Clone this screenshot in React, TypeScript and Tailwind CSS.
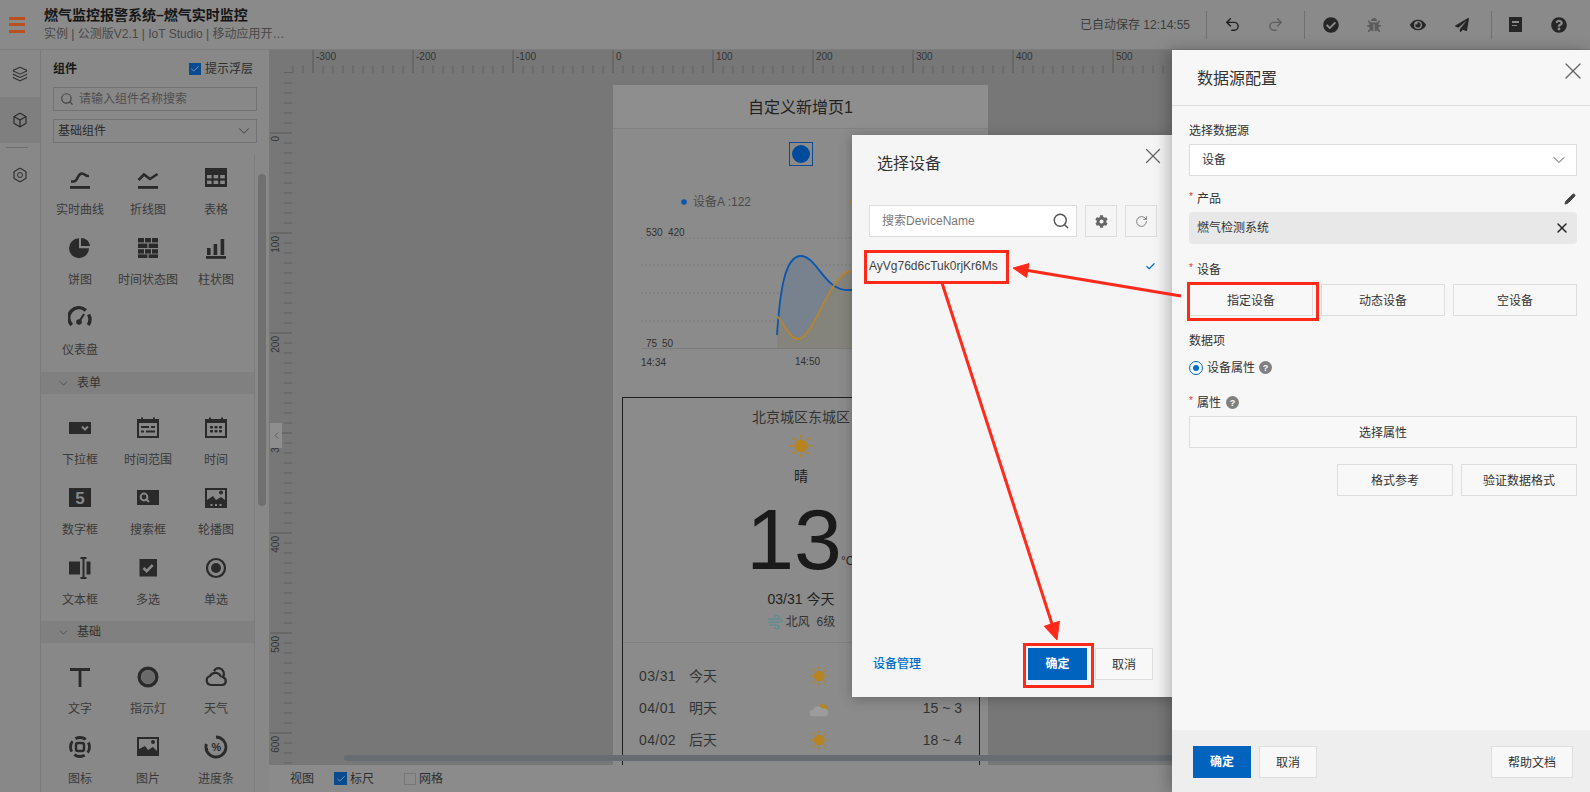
import { ReactNode } from "react";
import { Box, Check, ChevronDown, ChevronLeft, Hexagon, Layers, Pencil, RotateCw, Search, Undo2, Redo2, X } from "lucide-react";
import { FaBug, FaCheckCircle, FaCog, FaEye, FaPaperPlane, FaQuestionCircle } from "react-icons/fa";

const BG = "#888888";

function Ico({ children }: { children: ReactNode }) {
  return (
    <svg width="24" height="24" viewBox="0 0 24 24" fill="currentColor" className="text-[#2a2a2a]">
      {children}
    </svg>
  );
}

const icons: Record<string, ReactNode> = {
  curve: (
    <Ico>
      <rect x="2" y="20" width="20" height="2.8" />
      <path d="M3 15.5h3c4 0 3-8 8-8 3 0 3 3 7 2.5" fill="none" stroke="currentColor" strokeWidth="2.6" />
    </Ico>
  ),
  line: (
    <Ico>
      <rect x="2" y="20" width="20" height="2.8" />
      <path d="M2.5 14 8 8.5l6 4.5 7.5-5" fill="none" stroke="currentColor" strokeWidth="2.6" />
    </Ico>
  ),
  table: (
    <Ico>
      <rect x="1" y="2" width="22" height="19" />
      <g fill={BG}>
        <rect x="3" y="9" width="4.6" height="3.4" /><rect x="9.6" y="9" width="4.6" height="3.4" /><rect x="16.2" y="9" width="4.6" height="3.4" />
        <rect x="3" y="14.6" width="4.6" height="3.4" /><rect x="9.6" y="14.6" width="4.6" height="3.4" /><rect x="16.2" y="14.6" width="4.6" height="3.4" />
      </g>
    </Ico>
  ),
  pie: (
    <Ico>
      <path d="M11 2.2a10 10 0 1 0 10 10H11z" />
      <path d="M13 2a9 9 0 0 1 9 8h-9z" />
    </Ico>
  ),
  brick: (
    <Ico>
      <rect x="2" y="2" width="6" height="4.4" /><rect x="9" y="2" width="6" height="4.4" /><rect x="16" y="2" width="6" height="4.4" />
      <rect x="2" y="7.6" width="9.4" height="4.4" /><rect x="12.6" y="7.6" width="9.4" height="4.4" />
      <rect x="2" y="13.2" width="6" height="4.4" /><rect x="9" y="13.2" width="6" height="4.4" /><rect x="16" y="13.2" width="6" height="4.4" />
      <rect x="2" y="18.4" width="9.4" height="3.6" /><rect x="12.6" y="18.4" width="9.4" height="3.6" />
    </Ico>
  ),
  bars: (
    <Ico>
      <rect x="3" y="12" width="3.6" height="7" /><rect x="9.6" y="8" width="3.6" height="11" /><rect x="16.6" y="3" width="3.6" height="16" />
      <rect x="2" y="20" width="20" height="2.8" />
    </Ico>
  ),
  gauge: (
    <Ico>
      <path d="M3.8 19a10 10 0 0 1 14-14.5M20.6 8.5A10 10 0 0 1 20.2 19" fill="none" stroke="currentColor" strokeWidth="3.4" />
      <circle cx="11" cy="16" r="2.8" />
      <path d="m11 16 5-8" stroke="currentColor" strokeWidth="2" />
    </Ico>
  ),
  select: (
    <Ico>
      <rect x="1" y="6" width="22" height="12" />
      <path d="m14 10.5 3 3 3-3" fill="none" stroke={BG} strokeWidth="2" />
    </Ico>
  ),
  range: (
    <Ico>
      <rect x="2" y="4" width="20" height="17" fill="none" stroke="currentColor" strokeWidth="2" />
      <rect x="2" y="3" width="20" height="4" /><rect x="5" y="1.5" width="2" height="3" /><rect x="17" y="1.5" width="2" height="3" />
      <rect x="5" y="10" width="8" height="2" /><rect x="15" y="10" width="4" height="2" /><rect x="5" y="14.5" width="3" height="2" /><rect x="10" y="14.5" width="9" height="2" />
    </Ico>
  ),
  time: (
    <Ico>
      <rect x="2" y="4" width="20" height="17" fill="none" stroke="currentColor" strokeWidth="2" />
      <rect x="2" y="4" width="20" height="3" /><rect x="5" y="1.5" width="2" height="3" /><rect x="17" y="1.5" width="2" height="3" />
      <g><rect x="6" y="10" width="3" height="2.4" /><rect x="10.5" y="10" width="3" height="2.4" /><rect x="15" y="10" width="3" height="2.4" /><rect x="6" y="14" width="3" height="2.4" /><rect x="10.5" y="14" width="3" height="2.4" /><rect x="15" y="14" width="3" height="2.4" /></g>
    </Ico>
  ),
  num: (
    <Ico>
      <rect x="1" y="2" width="22" height="19" />
      <text x="12" y="18" textAnchor="middle" fontSize="17" fontWeight="700" fill={BG}>5</text>
    </Ico>
  ),
  searchbox: (
    <Ico>
      <rect x="1" y="4" width="22" height="15" />
      <circle cx="8" cy="11" r="3.4" fill="none" stroke={BG} strokeWidth="2" />
      <path d="m10.5 13.5 2.5 2.5" stroke={BG} strokeWidth="2" />
    </Ico>
  ),
  carousel: (
    <Ico>
      <rect x="1" y="2" width="22" height="20" />
      <path d="M3 14V4h18v10l-4-3-5 3-3-4z" fill={BG} />
      <circle cx="17" cy="6.5" r="2" />
      <rect x="6.5" y="18" width="2" height="2" fill={BG} /><rect x="11" y="18" width="2" height="2" fill={BG} /><rect x="15.5" y="18" width="2" height="2" fill={BG} />
    </Ico>
  ),
  textbox: (
    <Ico>
      <rect x="1" y="5.5" width="11" height="13" /><rect x="18.5" y="5.5" width="4" height="13" />
      <path d="M12.5 2h6M12.5 22h6M15.5 2v20" fill="none" stroke="currentColor" strokeWidth="2" />
    </Ico>
  ),
  check: (
    <Ico>
      <rect x="3.5" y="3" width="17.5" height="17.5" />
      <path d="m7.5 12 3.2 3.2 6-6.2" fill="none" stroke={BG} strokeWidth="2.6" />
    </Ico>
  ),
  radio: (
    <Ico>
      <circle cx="12" cy="12" r="9" fill="none" stroke="currentColor" strokeWidth="2.2" />
      <circle cx="12" cy="12" r="5" />
    </Ico>
  ),
  text: (
    <Ico>
      <path d="M2 4.5h20M12 4.5V22" fill="none" stroke="currentColor" strokeWidth="2.8" />
    </Ico>
  ),
  lamp: (
    <Ico>
      <circle cx="12" cy="12" r="8.8" fill="none" stroke="currentColor" strokeWidth="3.4" />
      <circle cx="12" cy="12" r="6.6" fill="#6a6a6a" />
    </Ico>
  ),
  weather: (
    <Ico>
      <path d="M7 20h11a4 4 0 0 0 1-7.8 6 6 0 0 0-3.4-9 5.5 5.5 0 0 0-5.6 3M7 20a4.6 4.6 0 0 1-1-9 6 6 0 0 1 11 1" fill="none" stroke="currentColor" strokeWidth="2.2" />
    </Ico>
  ),
  icon: (
    <Ico>
      <circle cx="12" cy="12" r="9.5" fill="none" stroke="currentColor" strokeWidth="2.8" strokeDasharray="11 3.9" strokeDashoffset="5" />
      <rect x="8" y="8" width="8" height="8" rx="2" fill="none" stroke="currentColor" strokeWidth="2.4" />
    </Ico>
  ),
  image: (
    <Ico>
      <rect x="1" y="2" width="22" height="19" />
      <path d="M3 14V4h18v12l-4-4-5 3-3-4z" fill={BG} />
      <circle cx="17" cy="7" r="2" />
    </Ico>
  ),
  progress: (
    <Ico>
      <path d="M12 2a10 10 0 1 1-9.6 7" fill="none" stroke="currentColor" strokeWidth="2.8" />
      <path d="M2.5 13a10 10 0 0 0 .5 3" fill="none" stroke="currentColor" strokeWidth="2.8" />
      <text x="12.5" y="16" textAnchor="middle" fontSize="11" fontWeight="700" fill="currentColor">%</text>
    </Ico>
  ),
};

const group1 = [["实时曲线", "curve"], ["折线图", "line"], ["表格", "table"], ["饼图", "pie"], ["时间状态图", "brick"], ["柱状图", "bars"], ["仪表盘", "gauge"]];
const group2 = [["下拉框", "select"], ["时间范围", "range"], ["时间", "time"], ["数字框", "num"], ["搜索框", "searchbox"], ["轮播图", "carousel"], ["文本框", "textbox"], ["多选", "check"], ["单选", "radio"]];
const group3 = [["文字", "text"], ["指示灯", "lamp"], ["天气", "weather"], ["图标", "icon"], ["图片", "image"], ["进度条", "progress"]];

function WidgetGrid({ items, className }: { items: string[][]; className: string }) {
  return (
    <div className={"grid grid-cols-[repeat(3,68px)] pl-[5px] " + className}>
      {items.map(([label, key]) => (
        <div key={label} className="h-[70px] flex flex-col items-center">
          <div className="mt-[11px] h-6">{icons[key]}</div>
          <div className="mt-[11px] h-[18px] leading-[18px] text-xs text-[#3a3a3a] whitespace-nowrap">{label}</div>
        </div>
      ))}
    </div>
  );
}

function SectionHead({ label }: { label: string }) {
  return (
    <div className="h-[22px] bg-[#808080] flex items-center pl-[16px] text-xs text-[#333333]">
      <ChevronDown size={13} strokeWidth={1.4} className="mr-[7px] text-[#444444]" />
      {label}
    </div>
  );
}

function Sun({ size = 24 }: { size?: number }) {
  return (
    <svg width={size} height={size} viewBox="0 0 24 24" className="text-[#b8841e]" fill="currentColor">
      <circle cx="12" cy="12" r="6.4" />
      <path d="M12 .8v3M12 20.2v3M.8 12h3M20.2 12h3M4 4l2 2M18 18l2 2M20 4l-2 2M6 18l-2 2" stroke="currentColor" strokeWidth="2" />
    </svg>
  );
}

function CloudSun() {
  return (
    <svg width="24" height="24" viewBox="0 0 24 24">
      <path d="M13 8a6 6 0 0 1 9 6h-7z" fill="#b8841e" />
      <path d="M5 22a4 4 0 0 1 0-8 6 6 0 0 1 11-1 4.5 4.5 0 0 1 4 9z" fill="#9c9c9c" />
    </svg>
  );
}

function HRuler() {
  const ticks = [];
  for (let x = 293; x < 1180; x += 10) {
    const major = (x - 613) % 100 === 0;
    ticks.push(<line key={x} x1={x} x2={x} y1={major ? 50 : 65} y2={73} stroke={major ? "#5a5a5a" : "#626262"} strokeWidth="1" />);
    if (major) {
      ticks.push(
        <text key={"t" + x} x={x + 3} y={60} fontSize="10" fill="#333333">
          {x - 613}
        </text>
      );
    }
  }
  return (
    <svg width="903" height="23" viewBox="269 50 903 23" className="block shrink-0">
      <line x1="284" x2="293" y1="72.5" y2="72.5" stroke="#626262" />
      {ticks}
    </svg>
  );
}

function VRuler() {
  const ticks = [];
  for (let y = 83; y < 765; y += 10) {
    const major = (y - 133) % 100 === 0;
    ticks.push(<line key={y} x1={major ? 270 : 284} x2={292} y1={y} y2={y} stroke={major ? "#5a5a5a" : "#626262"} strokeWidth="1" />);
    if (major) {
      ticks.push(
        <text key={"t" + y} x={279} y={y + 3} fontSize="10" fill="#333333" textAnchor="end" transform={`rotate(-90 279 ${y + 3})`}>
          {y - 133}
        </text>
      );
    }
  }
  return (
    <svg width="24" height="692" viewBox="269 73 24 692" className="block shrink-0">
      {ticks}
    </svg>
  );
}

function Chart() {
  const blue = "M777 335C780 290 785 256 801 256 816 256 824 288 845 290L860 290";
  const orange = "M777 316C785 325 790 339 798 339 814 339 830 271 852 271L860 271";
  return (
    <svg width="375" height="212" viewBox="613 185 375 212" className="block">
      <circle cx="684" cy="202" r="2.8" fill="#0a56ad" />
      <text x="693" y="206" fontSize="12" fill="#4a4a4a">设备A :122</text>
      <circle cx="853" cy="202" r="2.8" fill="#b9842a" />
      {[238, 265, 293, 321].map((y) => (
        <line key={y} x1="641" x2="980" y1={y} y2={y} stroke="#757575" strokeDasharray="1.5 2.5" />
      ))}
      <line x1="641" x2="980" y1="348.5" y2="348.5" stroke="#7c7c7c" />
      <text x="646" y="236" fontSize="10" fill="#2f2f2f">530</text>
      <text x="668" y="236" fontSize="10" fill="#2f2f2f">420</text>
      <text x="646" y="347" fontSize="10" fill="#2f2f2f">75</text>
      <text x="662" y="347" fontSize="10" fill="#2f2f2f">50</text>
      <text x="641" y="366" fontSize="10" fill="#2f2f2f">14:34</text>
      <text x="795" y="365" fontSize="10" fill="#2f2f2f">14:50</text>
      <path d={blue + "V348H777Z"} fill="#78828e" />
      <path d={orange + "V348H777Z"} fill="#85847c" />
      <path d={blue} fill="none" stroke="#0a56ad" strokeWidth="1.8" />
      <path d={orange} fill="none" stroke="#b9842a" strokeWidth="1.8" />
    </svg>
  );
}

function WeatherRow({ date, day, icon, temp }: { date: string; day: string; icon: ReactNode; temp: string }) {
  return (
    <div className="h-8 flex items-center pl-4 pr-[17px] pt-px text-sm text-[#333333]">
      <span className="w-[50px] tracking-[0.4px]">{date}</span>
      <span className="w-[120px]">{day}</span>
      <span className="w-5 h-5 flex items-center justify-center">{icon}</span>
      <span className="flex-1 text-right">{temp}</span>
    </div>
  );
}

function Phone() {
  return (
    <div className="w-[375px] h-[680px] ml-[320px] mt-[12px] bg-[#8b8b8b] shrink-0">
      <div className="h-[44px] pt-[3px] bg-[#8e8e8e] border-b border-[#828282] flex items-center justify-center text-base text-[#222222]">自定义新增页1</div>
      <div className="h-[56px] pt-[13px] flex justify-center">
        <div className="w-6 h-6 border border-[#0d4a8f] flex items-center justify-center">
          <div className="w-[18px] h-[18px] rounded-full bg-[#004a9c]" />
        </div>
      </div>
      <Chart />
      <div className="ml-[9px] w-[358px] h-[400px] border border-[#1f1f1f] flex flex-col">
        <div className="mt-[10px] h-[18px] leading-[18px] text-sm text-center text-[#333333]">北京城区东城区</div>
        <div className="mt-[8px] flex justify-center"><Sun /></div>
        <div className="mt-[9px] h-[18px] leading-[18px] text-sm text-center text-[#222222]">晴</div>
        <div className="relative mt-[14px] h-[80px] leading-[80px] pr-[14px] text-center text-[86px] text-[#1a1a1a]">
          13
          <span className="absolute left-[218px] top-[53px] text-xs leading-[18px] text-[#2a2a2a]">°C</span>
        </div>
        <div className="mt-[11px] h-[18px] leading-[18px] text-sm text-center text-[#222222]">03/31 今天</div>
        <div className="mt-[5px] h-[18px] flex items-center justify-center text-xs text-[#333333]">
          <svg width="16" height="14" viewBox="0 0 16 14" fill="none" stroke="#4d8c92" strokeWidth="1" className="mr-[3px]">
            <path d="M1 4h9a2 2 0 1 0-2-2M1 7h12.5a1.5 1.5 0 1 0-1.5-1.5M2 10h8a2 2 0 1 1-2 2" />
          </svg>
          北风&nbsp;&nbsp;6级
        </div>
        <div className="mt-[11px] border-t border-[#808080]" />
        <div className="mt-4">
          <WeatherRow date="03/31" day="今天" icon={<Sun size={20} />} temp="" />
          <WeatherRow date="04/01" day="明天" icon={<CloudSun />} temp="15 ~ 3" />
          <WeatherRow date="04/02" day="后天" icon={<Sun size={20} />} temp="18 ~ 4" />
        </div>
      </div>
    </div>
  );
}

function Btn({ children, className = "" }: { children: ReactNode; className?: string }) {
  return (
    <div className={"h-8 pt-px bg-[#f8f8f8] border border-[#dddddd] flex items-center justify-center text-xs text-[#333333] " + className}>
      {children}
    </div>
  );
}

function Label({ children, required, className = "" }: { children: ReactNode; required?: boolean; className?: string }) {
  return (
    <div className={"h-[18px] pt-px flex items-center text-xs text-[#333333] " + className}>
      {required && <span className="w-2 text-[#e62e2e] text-[10px] leading-[10px] -mt-1">*</span>}
      {children}
    </div>
  );
}

function Annotations() {
  return (
    <svg width="1590" height="792" viewBox="0 0 1590 792" className="absolute inset-0 pointer-events-none z-30" fill="none" stroke="#ff2a1a" strokeWidth="3">
      <rect x="865.5" y="251.5" width="142" height="31" />
      <rect x="1188.5" y="283.5" width="129" height="36" />
      <rect x="1024.5" y="644.5" width="68" height="42" />
      <path d="M1181 296 1028 270.5M942 283 1052 624" />
      <path d="M1013 268 1029 263.6 1026.6 277.4ZM1057 640 1059.4 621.3 1044.2 626.3Z" fill="#ff2a1a" strokeWidth="1" />
    </svg>
  );
}

export default function App() {
  return (
    <div className="relative w-[1590px] h-[792px] overflow-hidden flex flex-col bg-[#888888] [font-family:'Liberation_Sans','Noto_Sans_CJK_SC',sans-serif]">
      {/* top bar */}
      <div className="h-[50px] shrink-0 bg-[#8a8a8a] border-b border-[#7c7c7c] flex items-center pr-[9px]">
        <div className="w-[16px] ml-[9px] mr-[19px] flex flex-col gap-[3.5px]">
          <div className="h-[3px] bg-[#b85020]" />
          <div className="h-[3px] bg-[#b85020]" />
          <div className="h-[3px] bg-[#b85020]" />
        </div>
        <div className="w-[240px]">
          <div className="text-sm font-bold text-[#151515] leading-[18px] -mt-[2px] whitespace-nowrap">燃气监控报警系统–燃气实时监控</div>
          <div className="text-xs text-[#484848] leading-[16px] mt-[2px] whitespace-nowrap">实例 | 公测版V2.1 | IoT Studio | 移动应用开…</div>
        </div>
        <div className="ml-auto text-xs text-[#3c3c3c] pr-4 whitespace-nowrap">已自动保存 12:14:55</div>
        <div className="h-7 border-l border-[#6f6f6f] pl-1 pr-[7px] flex">
          <div className="w-[43px] flex items-center justify-center"><Undo2 size={17} strokeWidth={2} className="text-[#222222]" /></div>
          <div className="w-[43px] flex items-center justify-center"><Redo2 size={17} strokeWidth={2} className="text-[#5f5f5f]" /></div>
        </div>
        <div className="h-7 border-l border-[#6f6f6f] pl-1 pr-[7px] flex">
          <div className="w-[43px] flex items-center justify-center"><FaCheckCircle size={16} className="text-[#262626]" /></div>
          <div className="w-[44px] flex items-center justify-center"><FaBug size={14} className="text-[#5c5c5c]" /></div>
          <div className="w-[44px] flex items-center justify-center"><FaEye size={16} className="text-[#262626]" /></div>
          <div className="w-[44px] flex items-center justify-center"><FaPaperPlane size={14} className="text-[#262626]" /></div>
        </div>
        <div className="h-7 border-l border-[#6f6f6f] pl-[1px] flex">
          <div className="w-[44px] flex items-center justify-center">
            <div className="w-[13px] h-[15px] bg-[#262626] flex flex-col gap-[2px] pt-[4px] pl-[3px]">
              <div className="w-[7px] h-[1.5px] bg-[#8a8a8a]" />
              <div className="w-[5px] h-[1.5px] bg-[#8a8a8a]" />
            </div>
          </div>
          <div className="w-[44px] flex items-center justify-center"><FaQuestionCircle size={16} className="text-[#262626]" /></div>
        </div>
      </div>

      <div className="flex-1 flex min-h-0">
        {/* icon rail */}
        <div className="w-[41px] shrink-0 bg-[#888888] border-r border-[#7a7a7a] pt-[11px] flex flex-col items-center">
          <div className="h-[26px] mb-[10px] w-full flex items-center justify-center"><Layers size={16} strokeWidth={1.6} className="text-[#2e2e2e]" /></div>
          <div className="h-[46px] w-full bg-[#7f7f7f] flex items-center justify-center"><Box size={16} strokeWidth={1.8} className="text-[#2a2a2a]" /></div>
          <div className="mt-[4px] w-[22px] -ml-[6px] border-t border-[#6e6e6e]" />
          <div className="mt-[14px] h-[26px] flex items-center justify-center relative">
            <Hexagon size={16} strokeWidth={1.8} className="text-[#2e2e2e]" />
            <div className="absolute w-[6px] h-[6px] rounded-full border border-[#2e2e2e]" />
          </div>
        </div>

        {/* widgets panel */}
        <div className="w-[228px] shrink-0 bg-[#888888] flex flex-col">
          <div className="h-[105px] shrink-0 px-3">
            <div className="h-[37px] flex items-center text-xs">
              <span className="font-bold text-[#181818]">组件</span>
              <span className="ml-auto w-3 h-3 bg-[#0a4a8e] flex items-center justify-center mr-[4px]">
                <Check size={10} strokeWidth={2} className="text-[#8fa5bd]" />
              </span>
              <span className="text-[#2c2c2c] pr-[4px]">提示浮层</span>
            </div>
            <div className="w-[204px] h-6 border border-[#737373] flex items-center px-1 text-xs text-[#4f4f4f]">
              <Search size={14} className="text-[#444444] mr-[5px] ml-[2px]" />
              请输入组件名称搜索
            </div>
            <div className="w-[204px] h-6 mt-2 border border-[#737373] flex items-center pl-1 pr-[3px] text-xs text-[#2c2c2c]">
              基础组件
              <ChevronDown size={18} strokeWidth={1.3} className="ml-auto text-[#3d3d3d]" />
            </div>
          </div>
          <div className="flex-1 flex min-h-0 overflow-hidden">
            <div className="w-[213px] shrink-0">
              <WidgetGrid items={group1} className="" />
              <div className="mt-[7px]"><SectionHead label="表单" /></div>
              <WidgetGrid items={group2} className="mt-[11px]" />
              <div className="mt-[6px]"><SectionHead label="基础" /></div>
              <WidgetGrid items={group3} className="mt-[11px]" />
            </div>
            <div className="w-[15px] border-l border-[#7d7d7d] pt-[19px] pl-[3px]">
              <div className="w-2 h-[332px] rounded-full bg-[#707070]" />
            </div>
          </div>
        </div>

        {/* canvas */}
        <div className="relative flex-1 min-w-0 flex flex-col bg-[#777777]">
          <HRuler />
          <div className="flex-1 flex min-h-0 overflow-hidden">
            <VRuler />
            <Phone />
          </div>
          <div className="absolute left-[75px] top-[705px] w-[840px] h-[6px] rounded-full bg-[#666c71]" />
          <div className="absolute left-[1px] top-[373px] w-[12px] h-[25px] bg-[#8e8e8e] flex items-center justify-center">
            <ChevronLeft size={11} strokeWidth={1.4} className="text-[#444444]" />
          </div>
          <div className="h-[27px] shrink-0 bg-[#8b8b8b] flex items-center pl-[21px] text-xs text-[#2f2f2f]">
            <span>视图</span>
            <span className="ml-5 w-[13px] h-[13px] bg-[#0a4a8e] flex items-center justify-center">
              <Check size={10} strokeWidth={2} className="text-[#8fa5bd]" />
            </span>
            <span className="ml-[3px]">标尺</span>
            <span className="ml-[30px] w-3 h-3 border border-[#777777]" />
            <span className="ml-[3px]">网格</span>
          </div>
        </div>
      </div>

      {/* device modal */}
      <div className="absolute left-[852px] top-[135px] w-[322px] h-[562px] bg-[#f5f5f5] shadow-[0_2px_12px_rgba(0,0,0,0.25)] flex flex-col z-10">
        <div className="h-[54px] shrink-0 pt-[3px] flex items-center justify-between pl-[25px] pr-[8px] text-base text-[#333333]">
          选择设备
          <X size={26} strokeWidth={1.2} className="text-[#666666] -mt-4" />
        </div>
        <div className="mt-4 px-[17px] flex gap-2">
          <div className="w-[208px] h-8 bg-white border border-[#dddddd] flex items-center justify-between pl-[12px] pr-[6px] text-xs text-[#777777]">
            搜索DeviceName
            <Search size={18} strokeWidth={1.9} className="text-[#555555]" />
          </div>
          <div className="w-8 h-8 border border-[#dddddd] flex items-center justify-center"><FaCog size={13} className="text-[#666666]" /></div>
          <div className="w-8 h-8 border border-[#dddddd] flex items-center justify-center"><RotateCw size={13} strokeWidth={1.5} className="text-[#666666]" /></div>
        </div>
        <div className="mt-5 h-[18px] pl-[17px] pr-[18px] flex items-center justify-between text-xs text-[#444444]">
          AyVg76d6cTuk0rjKr6Ms
          <Check size={11} strokeWidth={2.6} className="text-[#0070cc]" />
        </div>
        <div className="mt-auto mb-[17px] h-8 pl-[21px] pr-[21px] flex items-center gap-2">
          <span className="mr-auto text-xs font-medium text-[#0070cc]">设备管理</span>
          <div className="w-[59px] h-8 bg-[#0064bf] flex items-center justify-center text-xs font-bold text-white">确定</div>
          <Btn className="w-[58px]">取消</Btn>
        </div>
      </div>

      {/* data source drawer */}
      <div className="absolute left-[1172px] top-[50px] bottom-0 w-[418px] bg-[#f7f7f7] shadow-[-4px_0_14px_rgba(0,0,0,0.25)] flex flex-col z-20">
        <div className="h-[56px] shrink-0 pt-[3px] border-b border-[#dddddd] flex items-center justify-between pl-[25px] pr-[3px] text-base text-[#333333]">
          数据源配置
          <X size={28} strokeWidth={1.2} className="text-[#666666] -mt-4" />
        </div>
        <div className="flex-1 pl-[17px] pr-[13px] pt-[15px]">
          <Label>选择数据源</Label>
          <div className="mt-[5px] h-8 bg-white border border-[#dddddd] flex items-center justify-between pl-[12px] pr-[7px] text-xs text-[#333333]">
            设备
            <ChevronDown size={20} strokeWidth={1.2} className="text-[#555555]" />
          </div>
          <Label required className="mt-[13px]">
            产品
            <Pencil size={12} fill="#444444" className="ml-auto mr-[1px] text-[#444444]" />
          </Label>
          <div className="mt-[5px] h-8 rounded-sm bg-[#e8e8e8] flex items-center justify-between pl-2 pr-[7px] text-xs text-[#333333]">
            燃气检测系统
            <X size={16} strokeWidth={2.2} className="text-[#222222]" />
          </div>
          <Label required className="mt-4">设备</Label>
          <div className="mt-[6px] grid grid-cols-3 gap-2">
            <Btn>指定设备</Btn>
            <Btn>动态设备</Btn>
            <Btn>空设备</Btn>
          </div>
          <Label className="mt-[15px]">数据项</Label>
          <Label className="mt-[9px]">
            <span className="w-[14px] h-[14px] rounded-full border border-[#0070cc] flex items-center justify-center mr-[4px]">
              <span className="w-[6px] h-[6px] rounded-full bg-[#0070cc]" />
            </span>
            设备属性
            <span className="ml-[4px] w-[13px] h-[13px] rounded-full bg-[#808080] text-white text-[9px] font-bold flex items-center justify-center">?</span>
          </Label>
          <Label required className="mt-[17px]">
            属性
            <span className="ml-[5px] w-[13px] h-[13px] rounded-full bg-[#808080] text-white text-[9px] font-bold flex items-center justify-center">?</span>
          </Label>
          <Btn className="mt-[5px]">选择属性</Btn>
          <div className="mt-4 flex justify-end gap-2">
            <Btn className="w-[116px]">格式参考</Btn>
            <Btn className="w-[116px]">验证数据格式</Btn>
          </div>
        </div>
        <div className="h-[62px] shrink-0 bg-[#eeeeee] flex items-start pt-[16px] pl-[21px] pr-[17px] gap-2">
          <div className="w-[58px] h-8 bg-[#0064bf] flex items-center justify-center text-xs font-bold text-white">确定</div>
          <Btn className="w-[58px]">取消</Btn>
          <Btn className="ml-auto w-[82px]">帮助文档</Btn>
        </div>
      </div>

      <Annotations />
    </div>
  );
}
